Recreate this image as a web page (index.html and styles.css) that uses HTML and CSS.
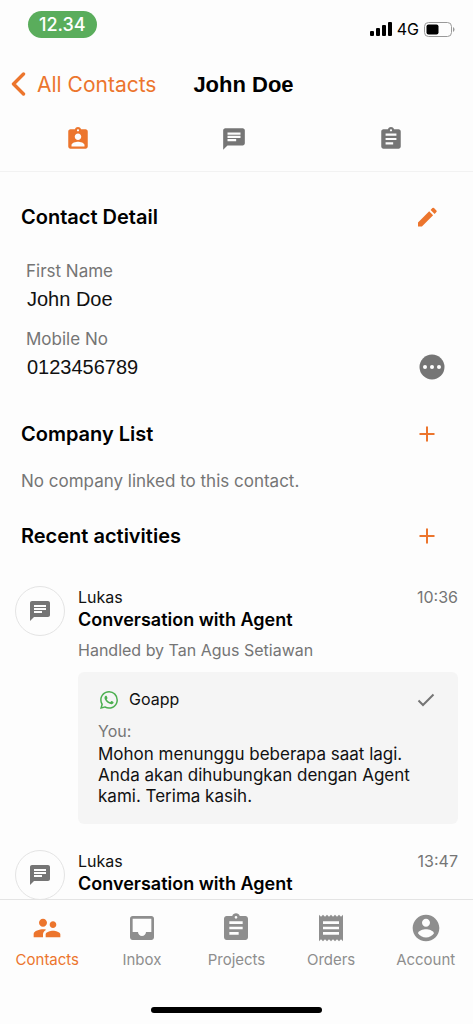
FILE: index.html
```html
<!DOCTYPE html>
<html lang="en">
<head>
<meta charset="utf-8">
<meta name="viewport" content="width=device-width, initial-scale=1">
<title>John Doe</title>
<link rel="stylesheet" href="styles.css">
</head>
<body>
<svg class="sprite" aria-hidden="true">
  <symbol id="chat" viewBox="0 0 24 24"><path d="M20 2H4c-1.100 0-2 .9-2 2v18l4-4h14c1.100 0 2-.9 2-2V4c0-1.100-.9-2-2-2zM6 9h12v2H6V9zm8 5H6v-2h8v2zm4-6H6V6h12v2z"/></symbol>
  <symbol id="clipboard" viewBox="0 0 24 24"><path d="M19 3h-4.180C14.400 1.840 13.300 1 12 1c-1.300 0-2.400.84-2.820 2H5c-1.100 0-2 .9-2 2v14c0 1.100.9 2 2 2h14c1.100 0 2-.9 2-2V5c0-1.100-.9-2-2-2zm-7 0c.55 0 1 .45 1 1s-.45 1-1 1-1-.45-1-1 .45-1 1-1zm2 14H7v-2h7v2zm3-4H7v-2h10v2zm0-4H7V7h10v2z"/></symbol>
  <symbol id="plus" viewBox="0 0 26 26"><path d="M13 5.500v15M5.500 13h15" fill="none" stroke="currentColor" stroke-width="2"/></symbol>
</svg>
<div class="app">
  <div class="status">
    <span class="clock">12.34</span>
    <div class="signals">
      <svg class="bars" viewBox="0 0 22 14" aria-hidden="true"><rect y="9" width="4" height="5" rx="1"/><rect x="6" y="6" width="4" height="8" rx="1"/><rect x="12" y="3" width="4" height="11" rx="1"/><rect x="18" width="4" height="14" rx="1"/></svg>
      <span>4G</span>
      <svg class="battery" viewBox="0 0 31 15" aria-hidden="true"><rect x=".5" y=".5" width="27" height="14" rx="4" fill="none" stroke="#999"/><rect x="2.500" y="2.500" width="12" height="10" rx="2"/><path d="M29 5v5q1.500-.8 1.500-2.500T29 5z" fill="#999"/></svg>
    </div>
  </div>
  <header class="header">
    <a class="back" href="#"><svg viewBox="0 0 16 24" aria-hidden="true"><path d="M13.500 2 3.500 12l10 10" fill="none" stroke="currentColor" stroke-width="3.400" stroke-linecap="round" stroke-linejoin="round"/></svg>All Contacts</a>
    <h1>John Doe</h1>
  </header>
  <div class="tabs">
    <button class="active" aria-label="Contact detail"><svg viewBox="0 0 24 24"><path d="M19 3h-4.180C14.400 1.840 13.300 1 12 1c-1.300 0-2.400.84-2.820 2H5c-1.100 0-2 .9-2 2v14c0 1.100.9 2 2 2h14c1.100 0 2-.9 2-2V5c0-1.100-.9-2-2-2zm-7 0c.55 0 1 .45 1 1s-.45 1-1 1-1-.45-1-1 .45-1 1-1zm0 4c1.660 0 3 1.340 3 3s-1.340 3-3 3-3-1.340-3-3 1.340-3 3-3zm6 12H6v-1.400c0-2 4-3.100 6-3.100s6 1.100 6 3.100V19z"/></svg></button>
    <button aria-label="Conversations"><svg><use href="#chat"/></svg></button>
    <button aria-label="Tasks"><svg><use href="#clipboard"/></svg></button>
  </div>
  <main class="content">
    <section class="detail">
      <div class="section-head">
        <h2>Contact Detail</h2>
        <button aria-label="Edit contact"><svg viewBox="0 0 26 26"><path d="M4 22.500v-4L15.200 7.300l3.900 3.900L7.900 22.500zM16.600 5.900l1.800-1.800q.8-.8 1.600 0l2.400 2.400q.8.800 0 1.600l-1.800 1.800z"/></svg></button>
      </div>
      <dl class="fields">
        <div><dt>First Name</dt><dd>John Doe</dd></div>
        <div><dt>Mobile No</dt><dd>0123456789<button class="more" aria-label="More options"><svg viewBox="0 0 26 26"><circle cx="13" cy="13" r="12.500"/><g fill="#fff"><circle cx="6" cy="13" r="2"/><circle cx="13" cy="13" r="2"/><circle cx="20" cy="13" r="2"/></g></svg></button></dd></div>
      </dl>
    </section>
    <section class="companies">
      <div class="section-head"><h2>Company List</h2><button aria-label="Add company"><svg><use href="#plus"/></svg></button></div>
      <p>No company linked to this contact.</p>
    </section>
    <section>
      <div class="section-head"><h2>Recent activities</h2><button aria-label="Add activity"><svg><use href="#plus"/></svg></button></div>
      <div class="feed">
        <article>
          <span class="avatar"><svg><use href="#chat"/></svg></span>
          <div class="entry">
            <div class="meta"><span>Lukas</span><time>10:36</time></div>
            <h3>Conversation with Agent</h3>
            <p class="handled">Handled by Tan Agus Setiawan</p>
            <div class="card">
              <div class="channel">
                <svg class="whatsapp" viewBox="0 0 24 24" aria-hidden="true"><path d="M17.472 14.382c-.297-.149-1.758-.867-2.030-.967-.273-.099-.471-.148-.67.15-.197.297-.767.966-.94 1.164-.173.199-.347.223-.644.075-.297-.15-1.255-.463-2.390-1.475-.883-.788-1.480-1.761-1.653-2.059-.173-.297-.018-.458.13-.606.134-.133.298-.347.446-.52.149-.174.198-.298.298-.497.099-.198.05-.371-.025-.52-.075-.149-.669-1.612-.916-2.207-.242-.579-.487-.5-.669-.51-.173-.008-.371-.01-.57-.01-.198 0-.52.074-.792.372-.272.297-1.040 1.016-1.040 2.479 0 1.462 1.065 2.875 1.213 3.074.149.198 2.096 3.200 5.077 4.487.709.306 1.262.489 1.694.625.712.227 1.360.195 1.871.118.571-.085 1.758-.719 2.006-1.413.248-.694.248-1.289.173-1.413-.074-.124-.272-.198-.57-.347m-5.421 7.403h-.004a9.870 9.870 0 0 1-5.031-1.378l-.361-.214-3.741.982.998-3.648-.235-.374a9.860 9.860 0 0 1-1.510-5.260c.001-5.450 4.436-9.884 9.888-9.884 2.640 0 5.122 1.030 6.988 2.898a9.825 9.825 0 0 1 2.893 6.994c-.003 5.450-4.437 9.884-9.885 9.884m8.413-18.297A11.815 11.815 0 0 0 12.050 0C5.495 0 .16 5.335.157 11.892c0 2.096.547 4.142 1.588 5.945L.057 24l6.305-1.654a11.882 11.882 0 0 0 5.683 1.448h.005c6.554 0 11.890-5.335 11.893-11.893a11.821 11.821 0 0 0-3.480-8.413z"/></svg>
                <span>Goapp</span>
                <svg class="check" viewBox="0 0 18 14" aria-hidden="true"><path d="m1.500 7.500 4.500 4.500L16.500 1.500" fill="none" stroke="currentColor" stroke-width="2"/></svg>
              </div>
              <p class="sender">You:</p>
              <p>Mohon menunggu beberapa saat lagi. Anda akan dihubungkan dengan Agent kami. Terima kasih.</p>
            </div>
          </div>
        </article>
        <article>
          <span class="avatar"><svg><use href="#chat"/></svg></span>
          <div class="entry">
            <div class="meta"><span>Lukas</span><time>13:47</time></div>
            <h3>Conversation with Agent</h3>
          </div>
        </article>
      </div>
    </section>
  </main>
  <footer class="footer">
    <nav>
      <a class="active" href="#"><svg viewBox="0 0 24 24"><path d="M16.500 12c1.380 0 2.490-1.120 2.490-2.500S17.880 7 16.500 7C15.120 7 14 8.120 14 9.500s1.120 2.500 2.500 2.500zM9 11c1.660 0 2.990-1.340 2.990-3S10.660 5 9 5C7.340 5 6 6.340 6 8s1.340 3 3 3zm7.500 3c-1.830 0-5.500.92-5.500 2.750V19h11v-2.250c0-1.830-3.670-2.750-5.500-2.750zM9 13c-2.330 0-7 1.170-7 3.500V19h7v-2.250c0-.85.33-2.340 2.370-3.470C10.500 13.100 9.660 13 9 13z"/></svg>Contacts</a>
      <a href="#"><svg viewBox="0 0 24 24"><path d="M19 3H4.990c-1.110 0-1.980.89-1.980 2L3 19c0 1.100.88 2 1.990 2H19c1.100 0 2-.9 2-2V5c0-1.110-.9-2-2-2zm0 12h-4c0 1.660-1.350 3-3 3s-3-1.340-3-3H4.990V5H19v10z"/></svg>Inbox</a>
      <a href="#"><svg><use href="#clipboard"/></svg>Projects</a>
      <a href="#"><svg viewBox="0 0 24 24"><path d="M18 17H6v-2h12v2zm0-4H6v-2h12v2zm0-4H6V7h12v2zM3 22l1.500-1.500L6 22l1.500-1.500L9 22l1.500-1.500L12 22l1.500-1.500L15 22l1.500-1.500L18 22l1.500-1.500L21 22V2l-1.500 1.500L18 2l-1.500 1.500L15 2l-1.500 1.500L12 2l-1.500 1.500L9 2 7.500 3.500 6 2 4.500 3.500 3 2v20z"/></svg>Orders</a>
      <a href="#"><svg viewBox="0 0 24 24"><path d="M12 2C6.480 2 2 6.480 2 12s4.480 10 10 10 10-4.480 10-10S17.520 2 12 2zm0 3c1.660 0 3 1.340 3 3s-1.340 3-3 3-3-1.340-3-3 1.340-3 3-3zm0 14.200c-2.500 0-4.710-1.280-6-3.220.03-1.990 4-3.080 6-3.080 1.990 0 5.970 1.090 6 3.080-1.290 1.940-3.500 3.220-6 3.220z"/></svg>Account</a>
    </nav>
    <div class="home-indicator"></div>
  </footer>
</div>
</body>
</html>
```
FILE: styles.css
```css
* { box-sizing: border-box; margin: 0; padding: 0; }
body { font-family: Inter, "Liberation Sans", sans-serif; color: #111; background: #fdfdfd; }
svg { display: block; fill: currentColor; flex: none; }
button { border: 0; background: none; color: inherit; cursor: pointer; }
a { color: inherit; text-decoration: none; }
.sprite { display: none; }

.app { height: 100vh; display: flex; flex-direction: column; }

.status { display: flex; justify-content: space-between; align-items: flex-start; padding: 11px 18px 0 28px; height: 60px; }
.clock { padding: 0 11px; border-radius: 14px; background: #5aad5c; color: #fff; font-size: 18px; line-height: 27px; font-weight: 500; }
.signals { display: flex; align-items: center; gap: 5px; padding-top: 8px; font-size: 16px; line-height: 20px; color: #000; }
.bars { width: 22px; height: 14px; }
.battery { width: 31px; height: 15px; }

.header { display: grid; grid-template-columns: 1fr auto 1fr; align-items: center; padding: 0 12px 0 10px; height: 48px; }
.back { display: flex; align-items: center; gap: 11px; color: #ec752d; font-size: 21px; white-space: nowrap; }
.back svg { width: 16px; height: 24px; }
h1 { padding: 2px 0 0 16px; font: 700 22px/30px "Liberation Sans", Arial, sans-serif; color: #000; }

.tabs { display: grid; grid-template-columns: repeat(3, 1fr); padding-right: 4px; height: 64px; border-bottom: 1px solid #f2f2f2; color: #757575; }
.tabs button { display: grid; place-items: center; padding-bottom: 1px; }
.tabs svg { width: 26px; height: 26px; }
.active, .tabs .active { color: #ec752d; }

.content { flex: 1; min-height: 0; overflow: hidden; padding-top: 30px; }
.section-head { display: flex; justify-content: space-between; align-items: center; padding: 0 33px 0 21px; height: 30px; }
h2 { font-size: 20px; line-height: 30px; font-weight: 600; color: #000; }
.section-head svg { width: 26px; height: 26px; }
.section-head button { color: #ec752d; }

.fields { padding: 26px 28px 0 26px; }
.fields > div { padding-bottom: 12px; }
dt { font-size: 17px; line-height: 26px; color: #757575; }
dd { display: flex; justify-content: space-between; align-items: center; padding-left: 1px; font: 20px/30px "Liberation Sans", Arial, sans-serif; }
.more { color: #757575; }
.more svg { width: 26px; height: 26px; }

.companies { padding: 25px 0 27px; }
.companies p { padding: 19px 21px 0; font-size: 17px; line-height: 26px; color: #757575; }

.feed { display: flex; flex-direction: column; gap: 26px; padding: 35px 15px 0; }
article { display: flex; gap: 13px; align-items: flex-start; }
.avatar { display: grid; place-items: center; width: 50px; height: 50px; border: 1px solid #e4e4e4; border-radius: 50%; color: #757575; flex: none; }
.avatar svg { width: 24px; height: 24px; }
.entry { flex: 1; min-width: 0; }
.meta { display: flex; justify-content: space-between; font-size: 16px; line-height: 22px; }
time { color: #757575; }
h3 { font-size: 18px; line-height: 24px; font-weight: 600; color: #000; }
.handled { padding: 6px 0 10px; font-size: 16px; line-height: 24px; color: #757575; }
.card { padding: 17px 20px; border-radius: 6px; background: #f5f5f5; font-size: 17px; line-height: 21px; }
.channel { display: flex; align-items: center; gap: 11px; padding: 0 3px 9px 2px; font-size: 16px; }
.whatsapp { width: 18px; height: 18px; color: #4caf50; }
.check { width: 18px; height: 14px; margin-left: auto; color: #757575; }
.card .sender { padding-bottom: 1px; font-size: 16px; line-height: 24px; color: #757575; }

.footer { border-top: 1px solid #e4e4e4; height: 125px; flex: none; display: flex; flex-direction: column; justify-content: space-between; padding: 12px 0 11px; }
nav { display: grid; grid-template-columns: repeat(5, 1fr); color: #8e8e8e; font-size: 15px; line-height: 20px; }
nav a { display: flex; flex-direction: column; align-items: center; gap: 6px; }
nav svg { width: 32px; height: 32px; }
.home-indicator { align-self: center; width: 36%; height: 6px; border-radius: 3px; background: #000; }
```
